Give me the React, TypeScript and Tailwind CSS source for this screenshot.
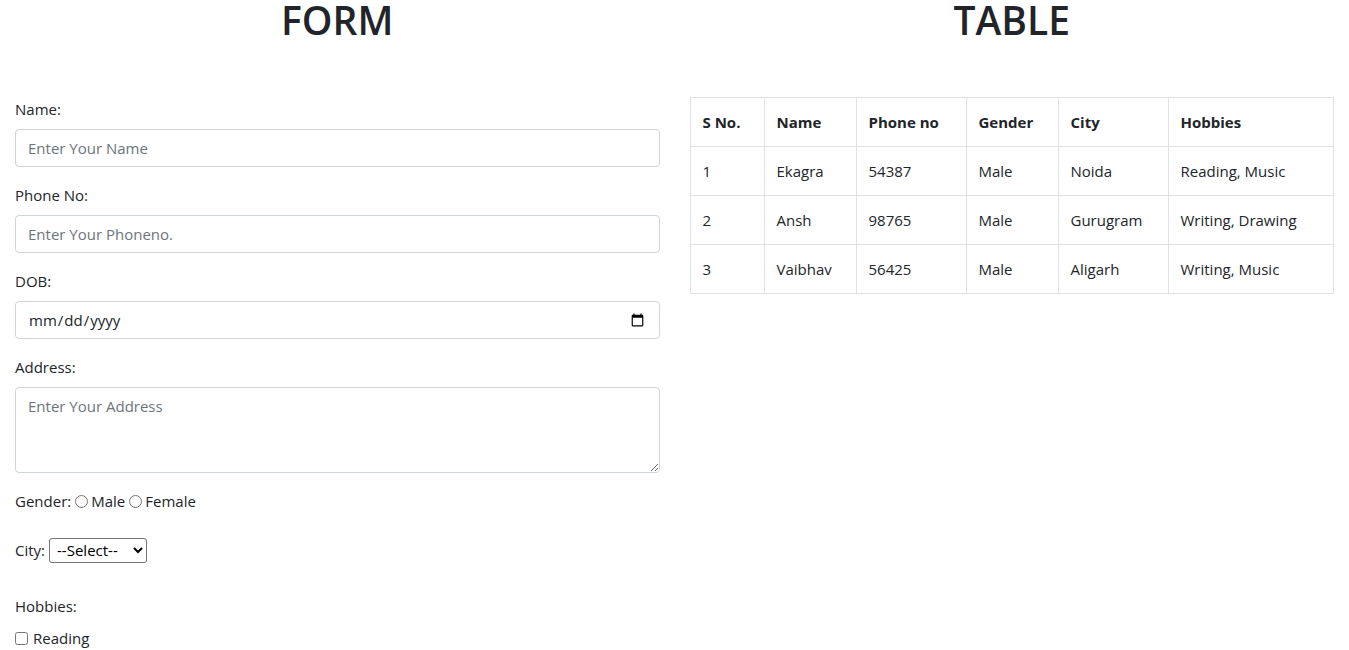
const rows = [
  { sno: 1, name: "Ekagra", phone: "54387", gender: "Male", city: "Noida", hobbies: "Reading, Music" },
  { sno: 2, name: "Ansh", phone: "98765", gender: "Male", city: "Gurugram", hobbies: "Writing, Drawing" },
  { sno: 3, name: "Vaibhav", phone: "56425", gender: "Male", city: "Aligarh", hobbies: "Writing, Music" },
];

const inputCls =
  "block w-full h-[38px] px-3 border border-[#ced4da] rounded bg-white text-[#212529] placeholder:text-[#6c757d] outline-none";

const App = () => {
  return (
    <div className="flex w-full bg-white text-[#212529] text-[15px] leading-6 font-['Open_Sans','Noto_Sans',sans-serif]">
      {/* Form column */}
      <div className="w-1/2 px-[15px]">
        <h1 className="h-12 text-center text-[39px] leading-[40px] font-semibold">FORM</h1>
        <form className="mt-[49px]">
          <div className="mb-4">
            <label className="block mb-2">Name:</label>
            <input type="text" placeholder="Enter Your Name" className={inputCls} />
          </div>
          <div className="mb-4">
            <label className="block mb-2">Phone No:</label>
            <input type="text" placeholder="Enter Your Phoneno." className={inputCls} />
          </div>
          <div className="mb-4">
            <label className="block mb-2">DOB:</label>
            <input type="date" className={inputCls} />
          </div>
          <div className="mb-4">
            <label className="block mb-2">Address:</label>
            <textarea
              rows={3}
              placeholder="Enter Your Address"
              className="block w-full h-[86px] px-3 py-[6px] border border-[#ced4da] rounded bg-white placeholder:text-[#6c757d] outline-none"
            />
          </div>

          {/* Gender */}
          <div className="h-6">
            Gender:
            <input type="radio" name="gender" className="ml-[4px] mr-[3px] align-[-1px]" />
            Male
            <input type="radio" name="gender" className="ml-[4px] mr-[3px] align-[-1px]" />
            Female
          </div>

          {/* City */}
          <div className="mt-6 flex items-center h-[26px]">
            <span>City:</span>
            <select className="ml-[4px] h-[25px] pl-[3px] pr-[1px] border border-[#767676] rounded-[3px] bg-white text-black">
              <option>--Select--</option>
              <option>Noida</option>
              <option>Gurugram</option>
              <option>Aligarh</option>
            </select>
          </div>

          {/* Hobbies */}
          <div className="mt-[31px]">
            <label className="block">Hobbies:</label>
            <div className="mt-2 flex items-center h-6">
              <input type="checkbox" className="mr-[5px]" />
              <span>Reading</span>
            </div>
          </div>
        </form>
      </div>

      {/* Table column */}
      <div className="w-1/2 px-[15px]">
        <h1 className="h-12 text-center text-[39px] leading-[40px] font-semibold">TABLE</h1>
        <table className="mt-[49px] w-full table-fixed border-collapse">
          <colgroup>
            <col className="w-[74px]" />
            <col className="w-[92px]" />
            <col className="w-[110px]" />
            <col className="w-[92px]" />
            <col className="w-[110px]" />
            <col />
          </colgroup>
          <thead>
            <tr>
              {["S No.", "Name", "Phone no", "Gender", "City", "Hobbies"].map((h) => (
                <th key={h} className="border border-[#dee2e6] p-3 text-left font-bold">
                  {h}
                </th>
              ))}
            </tr>
          </thead>
          <tbody>
            {rows.map((r) => (
              <tr key={r.sno}>
                <td className="border border-[#dee2e6] p-3">{r.sno}</td>
                <td className="border border-[#dee2e6] p-3">{r.name}</td>
                <td className="border border-[#dee2e6] p-3">{r.phone}</td>
                <td className="border border-[#dee2e6] p-3">{r.gender}</td>
                <td className="border border-[#dee2e6] p-3">{r.city}</td>
                <td className="border border-[#dee2e6] p-3">{r.hobbies}</td>
              </tr>
            ))}
          </tbody>
        </table>
      </div>
    </div>
  );
};

export default App;
